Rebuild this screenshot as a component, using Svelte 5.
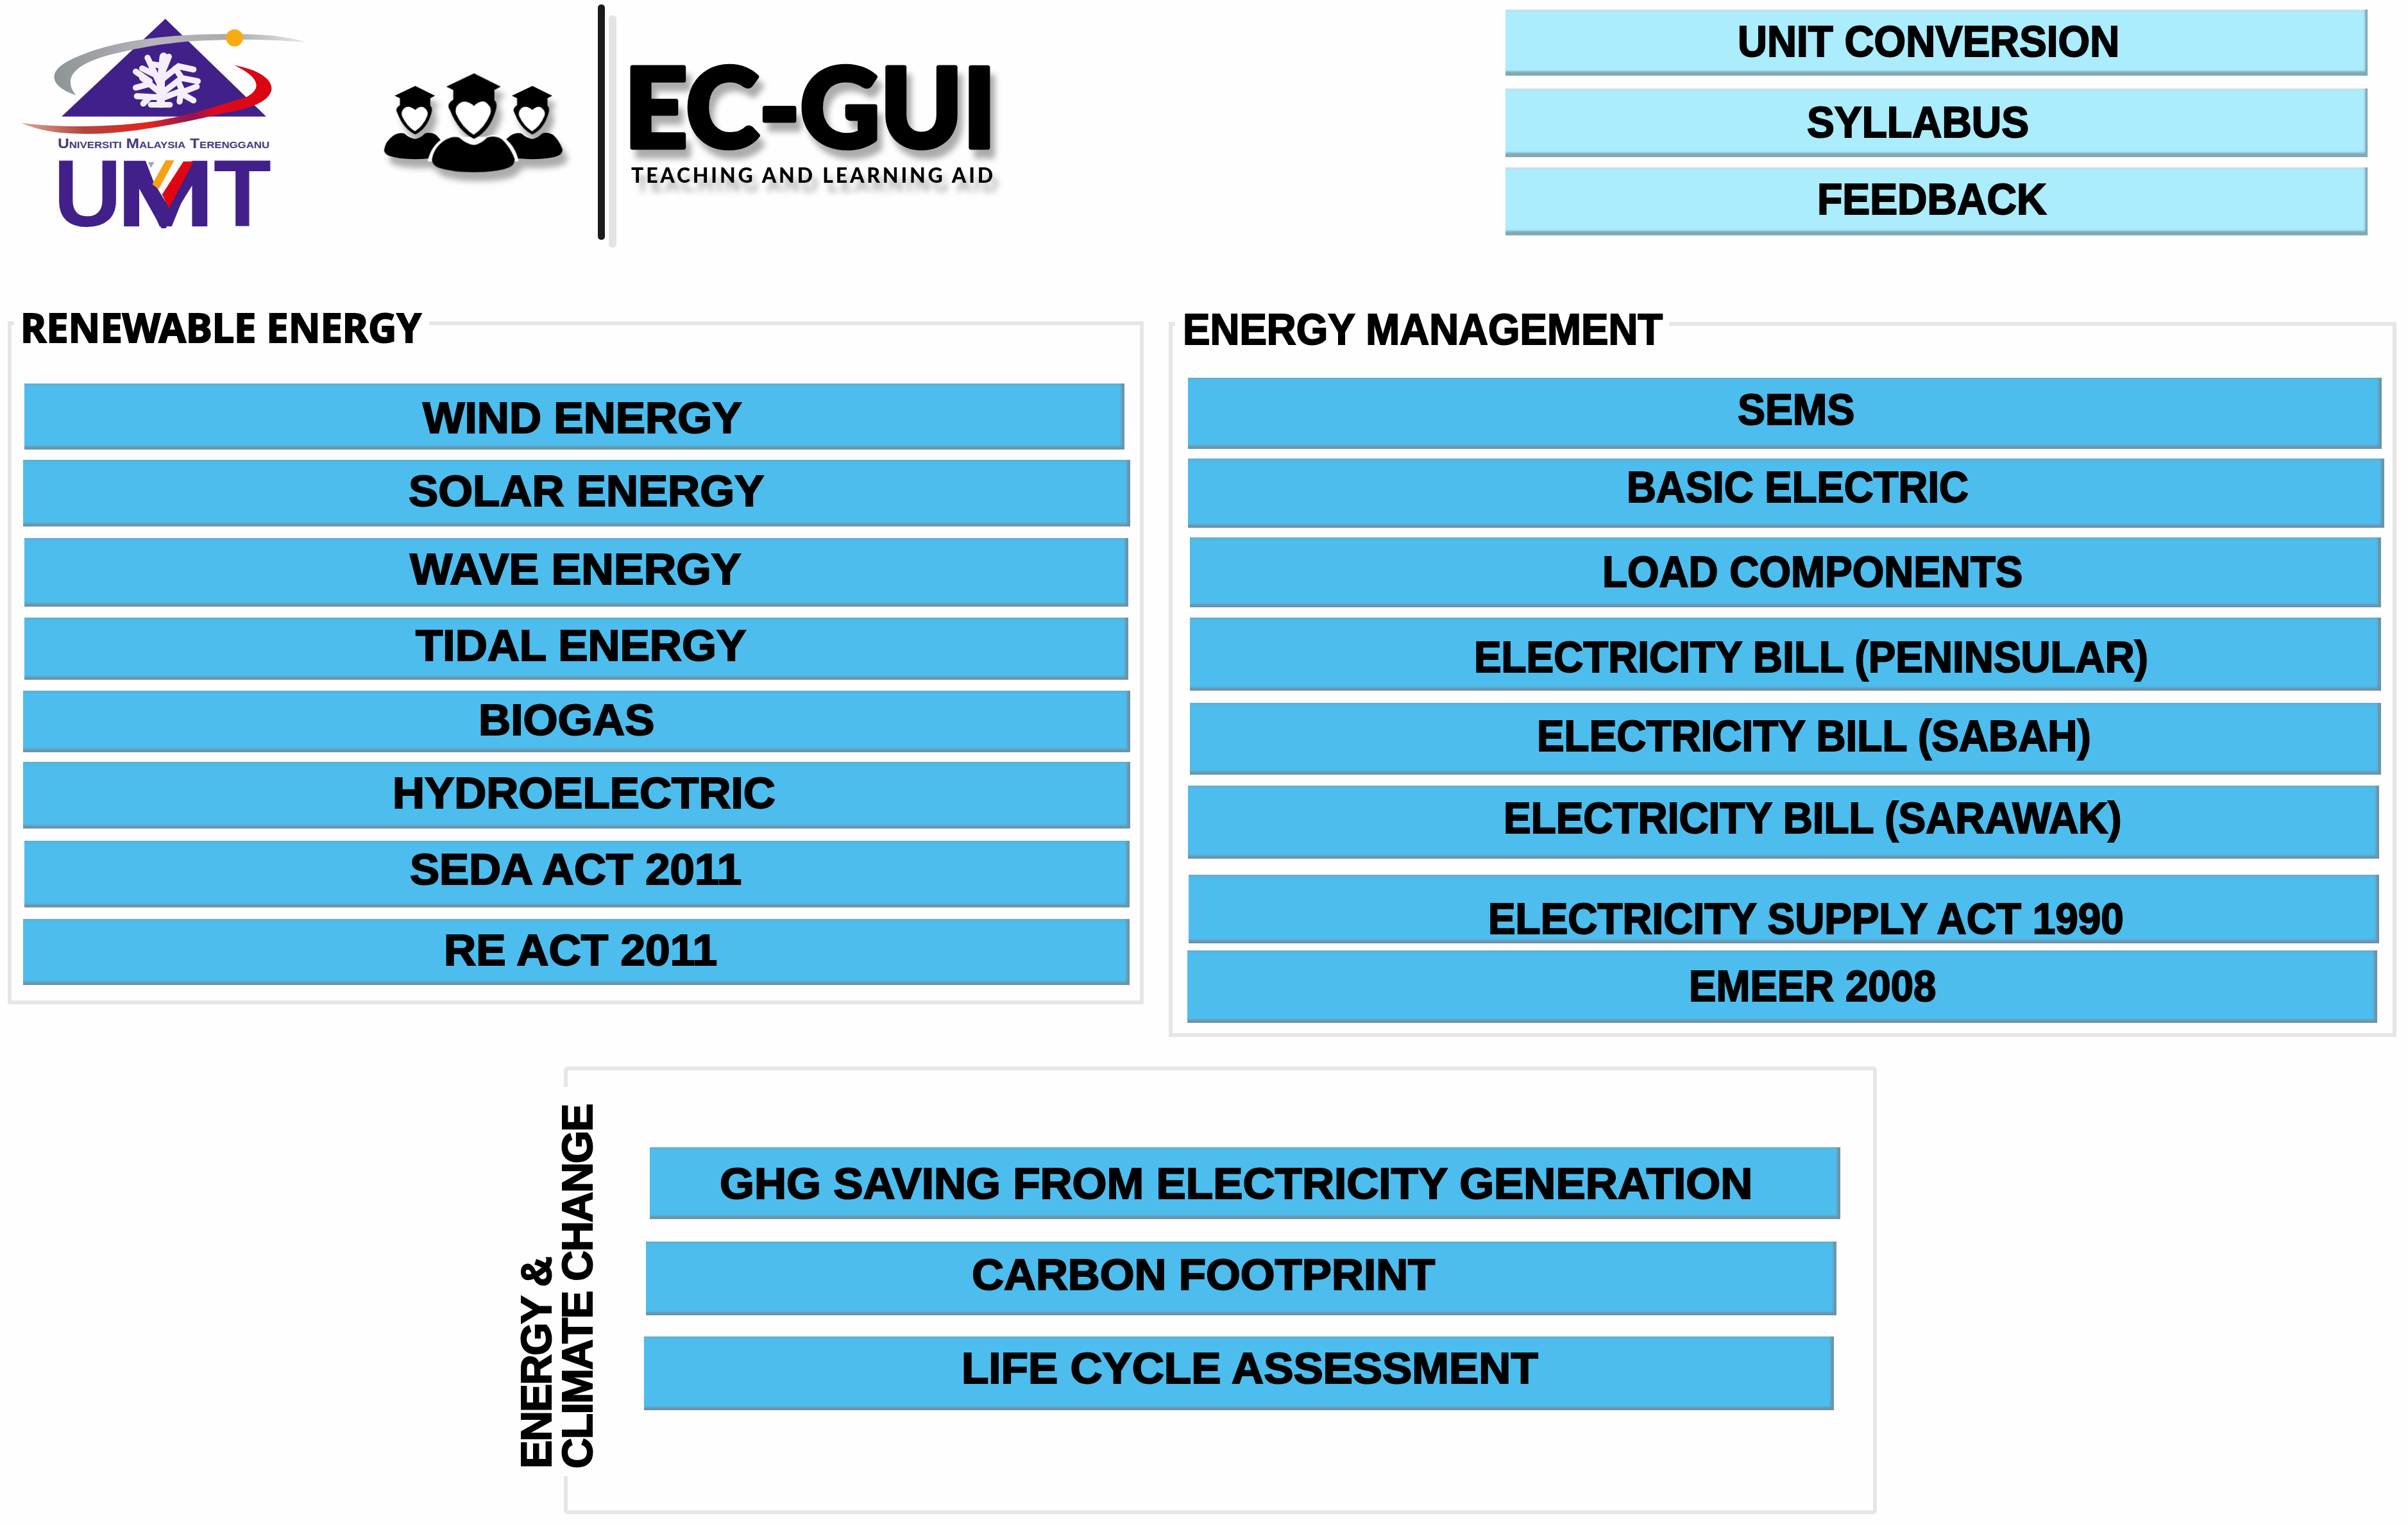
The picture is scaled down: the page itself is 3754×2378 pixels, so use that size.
<script>
  const links = [
    { name: "UNIT CONVERSION", gap: 0, indent: 0, w: 1344, h: 103, left: 366, top: 14, tw: 588 },
    { name: "SYLLABUS", gap: 20, indent: 0, w: 1344, h: 107, left: 474, top: 17, tw: 338 },
    { name: "FEEDBACK", gap: 16, indent: 0, w: 1344, h: 106, left: 490, top: 14, tw: 350 },
  ];

  const renewable = [
    { name: "WIND ENERGY", gap: 90, indent: 19, w: 1715, h: 103, left: 625, top: 18, tw: 489 },
    { name: "SOLAR ENERGY", gap: 16, indent: 17, w: 1726, h: 104, left: 605, top: 13, tw: 546 },
    { name: "WAVE ENERGY", gap: 18, indent: 19, w: 1721, h: 107, left: 605, top: 13, tw: 508 },
    { name: "TIDAL ENERGY", gap: 17, indent: 19, w: 1721, h: 97, left: 614, top: 8, tw: 507 },
    { name: "BIOGAS", gap: 17, indent: 17, w: 1726, h: 96, left: 714, top: 10, tw: 266 },
    { name: "HYDROELECTRIC", gap: 15, indent: 17, w: 1726, h: 104, left: 580, top: 13, tw: 589 },
    { name: "SEDA ACT 2011", gap: 19, indent: 19, w: 1723, h: 104, left: 605, top: 9, tw: 509 },
    { name: "RE ACT 2011", gap: 18, indent: 17, w: 1725, h: 103, left: 660, top: 13, tw: 418 },
  ];

  const management = [
    { name: "SEMS", gap: 80, indent: 23, w: 1861, h: 111, left: 861, top: 14, tw: 175 },
    { name: "BASIC ELECTRIC", gap: 15, indent: 23, w: 1865, h: 108, left: 688, top: 9, tw: 525 },
    { name: "LOAD COMPONENTS", gap: 15, indent: 26, w: 1857, h: 109, left: 647, top: 18, tw: 648 },
    { name: "ELECTRICITY BILL (PENINSULAR)", gap: 16, indent: 26, w: 1857, h: 114, left: 447, top: 26, tw: 1044 },
    { name: "ELECTRICITY BILL (SABAH)", gap: 19, indent: 26, w: 1857, h: 112, left: 545, top: 16, tw: 856 },
    { name: "ELECTRICITY BILL (SARAWAK)", gap: 17, indent: 23, w: 1857, h: 114, left: 496, top: 15, tw: 956 },
    { name: "ELECTRICITY SUPPLY ACT 1990", gap: 25, indent: 24, w: 1856, h: 107, left: 471, top: 33, tw: 983 },
    { name: "EMEER 2008", gap: 11, indent: 22, w: 1855, h: 113, left: 786, top: 20, tw: 378 },
  ];

  const climate = [
    { name: "GHG SAVING FROM ELECTRICITY GENERATION", gap: 119, indent: 127, w: 1856, h: 112, left: 113, top: 21, tw: 1602 },
    { name: "CARBON FOOTPRINT", gap: 35, indent: 121, w: 1856, h: 115, left: 512, top: 16, tw: 714 },
    { name: "LIFE CYCLE ASSESSMENT", gap: 33, indent: 118, w: 1855, h: 115, left: 499, top: 14, tw: 891 },
  ];

  //Stretch or squeeze a label to the given width
  function fit(node, width) {
    node.style.transform = `scaleX(${width / (node.offsetWidth - 8)})`;
  }
</script>

{#snippet bar(item, kind)}
  <button
    class="bar {kind}"
    style="margin-top: {item.gap}px; margin-left: {item.indent}px; width: {item.w}px; height: {item.h}px; padding: {item.top}px 0 0 {item.left - 4}px;"
  >
    <span class="label" use:fit={item.tw}>{item.name}</span>
  </button>
{/snippet}

<main>
  <header>
    <svg class="umt" viewBox="0 0 1560 1200">
      <defs>
        <linearGradient id="silver" x1="0" x2="1">
          <stop offset="0" stop-color="#8d9496" />
          <stop offset="0.4" stop-color="#b9b3bd" />
          <stop offset="0.7" stop-color="#a9aca8" />
          <stop offset="1" stop-color="#e9e6ee" />
        </linearGradient>
        <linearGradient id="swoosh" x1="0" x2="1">
          <stop offset="0" stop-color="#e0a78f" />
          <stop offset="0.25" stop-color="#b2443f" />
          <stop offset="0.5" stop-color="#e3261c" />
          <stop offset="0.68" stop-color="#8f1550" />
          <stop offset="0.78" stop-color="#df0a1d" />
          <stop offset="1" stop-color="#d9060f" />
        </linearGradient>
      </defs>
      <path d="M773 88 L1245 545 H288 Z" fill="#41208a" />
      <path
        d="M355 445 C235 405 215 335 330 280 C480 205 700 165 1000 160 C1200 155 1330 165 1435 198 C1300 187 1150 182 1000 188 C800 192 640 225 500 260 C340 305 295 370 355 445 Z"
        fill="url(#silver)"
      />
      <circle cx="1097" cy="177" r="40" fill="#f8ab12" />
      <g fill="none" stroke="#f4eefb" stroke-linecap="round" stroke-width="28">
        <path d="M752 485 V390 L765 265" stroke-width="38" />
        <path d="M705 490 H795" stroke-width="26" />
        <path d="M750 400 L690 270 M725 350 L665 320 M700 380 L635 335" />
        <path d="M745 430 L665 365 M690 395 L635 410 M740 455 L640 450 M700 455 L670 485" />
        <path d="M755 350 L790 265 M760 370 L835 310 L905 325 M820 320 L850 365" />
        <path d="M765 430 L850 365 L925 380 M835 385 L855 430 L920 405" />
        <path d="M770 455 L835 430 L905 470 M845 440 L840 475 M770 310 L710 300" />
      </g>
      <path
        d="M100 575 C300 600 560 595 760 560 C900 535 1030 490 1150 455 C1220 420 1225 365 1095 305 C1210 325 1275 370 1270 420 C1260 475 1170 510 1040 530 C880 570 620 625 420 626 C290 626 190 615 100 575 Z"
        fill="url(#swoosh)"
      />
      <text class="umt-small" x="270" y="694" textLength="990" lengthAdjust="spacingAndGlyphs">Universiti Malaysia Terengganu</text>
      <g class="umt-big">
        <text x="250" y="1060">U</text>
        <text transform="translate(542 1060) scale(1.26 1)">M</text>
        <text x="998" y="1060">T</text>
      </g>
      <path d="M680 750 L820 750 L900 750 L770 985 Z" fill="#fff" />
      <path d="M580 755 H660 L775 945 L890 755 H968 L775 1068 H755 Z" fill="#41208a" />
      <path d="M692 758 H722 L706 785 Z" fill="#9aa9bd" />
      <path d="M775 750 H815 L742 885 L712 862 Z" fill="#f9a013" />
      <path d="M858 755 H905 L790 975 L758 910 Z" fill="#e0060f" />
    </svg>

    <svg class="brand" viewBox="560 0 1060 400">
      <defs>
        <g id="graduate">
          <path d="M0 0 L125 62 L95 78 V125 Q112 140 102 172 Q75 270 0 307 Q-75 270 -113 172 Q-132 145 -97 122 V78 L-130 62 Z" />
          <path d="M0 152 Q40 115 65 145 Q85 165 76 190 Q50 255 -2 287 Q-55 255 -84 190 Q-92 160 -70 142 Q-42 118 0 152 Z" fill="#fff" />
          <path d="M-70 300 Q-105 292 -140 315 Q-190 350 -197 405 Q-195 430 -165 442 Q-100 463 0 463 Q110 462 160 442 Q192 430 190 400 Q170 345 130 308 Q95 288 62 300 Q30 332 0 335 Q-35 332 -70 300 Z" />
        </g>
      </defs>
      <g class="shadow">
        <g transform="translate(560 0) scale(0.33333)">
          <use href="#graduate" transform="translate(262 402) scale(0.74)" />
          <use href="#graduate" transform="translate(810 402) scale(0.74)" />
          <path d="M320 755 Q335 680 395 645 Q440 620 480 640 L590 640 Q640 620 680 645 Q735 690 745 755 Z" fill="#fff" />
          <use href="#graduate" transform="translate(537 343)" />
        </g>
        <text class="title" x="973" y="230" textLength="580" lengthAdjust="spacingAndGlyphs">EC-GUI</text>
        <text class="tagline" x="984" y="285" textLength="564">TEACHING AND LEARNING AID</text>
      </g>
      <rect x="949" y="24" width="12" height="362" rx="5" fill="#e3e3e3" />
      <rect x="932" y="7" width="11" height="367" rx="5" fill="#1a1a1a" />
    </svg>

    <nav>
      {#each links as item}
        {@render bar(item, "light")}
      {/each}
    </nav>
  </header>

  <div class="columns">
    <section class="panel renewable">
      <h2 class="legend tahoma"><span class="label" use:fit={617}>RENEWABLE ENERGY</span></h2>
      {#each renewable as item}
        {@render bar(item, "blue")}
      {/each}
    </section>

    <section class="panel management">
      <h2 class="legend"><span class="label" use:fit={741}>ENERGY MANAGEMENT</span></h2>
      {#each management as item}
        {@render bar(item, "blue")}
      {/each}
    </section>
  </div>

  <section class="panel climate">
    <h2 class="side">ENERGY &amp;<br />CLIMATE CHANGE</h2>
    {#each climate as item}
      {@render bar(item, "blue")}
    {/each}
  </section>
</main>

<style>
  :global(body) {
    background-color: #fefefe;
  }

  main {
    width: 3754px;
    height: 2378px;
    overflow: hidden;
    font-family: "Liberation Sans", Arial, sans-serif;
    color: #000;
  }

  header {
    display: flex;
    height: 501px;
  }

  .umt {
    width: 520px;
    height: 400px;
    margin-right: 40px;
  }

  .umt-small {
    font-size: 66px;
    font-variant: small-caps;
    font-weight: bold;
    fill: #453a80;
  }

  .umt-big {
    font-size: 443px;
    font-weight: bold;
    fill: #41208a;
  }

  .brand {
    width: 1060px;
    height: 400px;
  }

  .shadow {
    filter: drop-shadow(8px 14px 5px rgba(0, 0, 0, 0.32));
  }

  .title {
    font-family: Lato, sans-serif;
    font-size: 171px;
    font-weight: 900;
    stroke: #000;
    stroke-width: 7px;
    stroke-linejoin: round;
  }

  .tagline {
    font-family: Lato, sans-serif;
    font-size: 32px;
    font-weight: 900;
  }

  nav {
    margin: 15px 0 0 727px;
  }

  .columns {
    display: flex;
    align-items: flex-start;
    gap: 39px;
    height: 1162px;
    padding-left: 12px;
  }

  .panel {
    position: relative;
    box-sizing: border-box;
    border: 6px solid #e6e5e7;
    padding: 1px;
  }

  .renewable {
    width: 1771px;
    height: 1065px;
  }

  .management {
    width: 1914px;
    height: 1115px;
    margin-top: 1px;
  }

  .panel.climate {
    width: 2047px;
    height: 698px;
    margin-left: 879px;
    border-radius: 6px;
  }

  /* headings lie over the panel border */
  .legend {
    position: absolute;
    top: -30px;
    left: 4px;
    width: 647px;
    height: 70px;
    box-sizing: border-box;
    margin: 0;
    padding-left: 10px;
    background-color: #fefefe;
  }

  .management .legend {
    width: 770px;
    padding-left: 12px;
  }

  .tahoma {
    font-family: "Noto Sans", sans-serif;
  }

  .tahoma .label {
    font-size: 63px;
    line-height: 66px;
  }

  .side {
    position: absolute;
    top: 26px;
    left: -81px;
    box-sizing: border-box;
    width: 128px;
    height: 607px;
    margin: 0;
    padding-top: 12px;
    background-color: #fefefe;
    font-size: 66px;
    line-height: 64px;
    letter-spacing: -1.8px;
    white-space: nowrap;
    writing-mode: vertical-rl;
    transform: rotate(180deg);
    -webkit-text-stroke: 2px #000;
  }

  .bar {
    display: flex;
    align-items: flex-start;
    justify-content: flex-start;
    box-sizing: border-box;
    border: none;
    font-family: inherit;
    text-align: left;
    color: #000;
    cursor: pointer;
  }

  .bar.blue {
    background-color: #4dbdee;
    box-shadow:
      inset -6px -6px 3px -1px #6e93a8,
      inset 0 5px 3px -2px #5fb0d2;
  }

  .bar.light {
    background-color: #abecfd;
    box-shadow:
      inset -5px -8px 3px -1px #7fa9b5,
      inset 0 5px 3px -2px #c2dfe8;
  }

  .label {
    display: block;
    flex: none;
    width: max-content;
    font-size: 68px;
    font-weight: bold;
    line-height: 70px;
    white-space: nowrap;
    transform-origin: left center;
    -webkit-text-stroke: 2px #000;
  }
</style>
